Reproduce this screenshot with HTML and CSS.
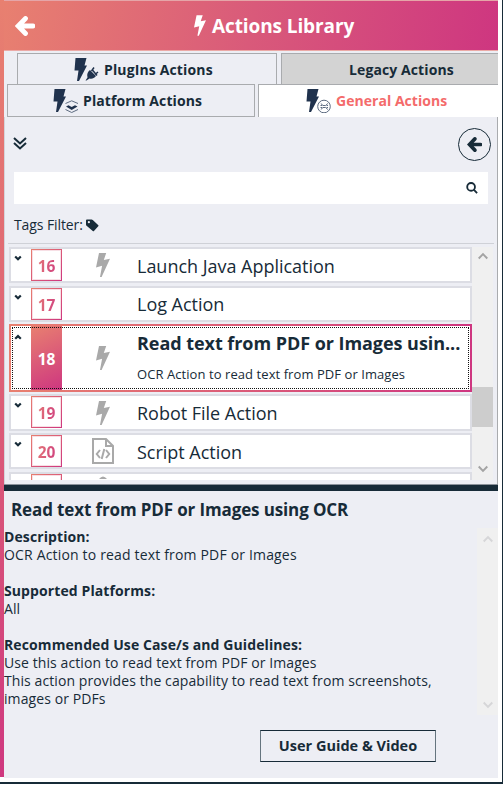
FILE: index.html
```html
<!DOCTYPE html>
<html lang="en">
<head>
<meta charset="utf-8">
<title>Actions Library</title>
<link rel="stylesheet" href="styles.css">
</head>
<body>
<svg class="defs" aria-hidden="true">
  <symbol id="bolt" viewBox="0 0 14 24"><path d="M3 0H10.2L7.8 7L14 5.8L5.600 24H4L6.100 12.800L0 14.400Z"/></symbol>
  <symbol id="arrow" viewBox="0 0 20 20"><path d="M10.500 2.500L3.200 10L10.500 17.500M4 10H18" fill="none" stroke="currentColor" stroke-width="4.800" stroke-linecap="round"/></symbol>
  <symbol id="up" viewBox="0 0 10 8"><path d="M.7 6.5L5 2.2L9.3 6.5" fill="none" stroke="currentColor" stroke-width="1.9"/></symbol>
  <symbol id="down" viewBox="0 0 10 8"><path d="M.7 1.5L5 5.8L9.3 1.5" fill="none" stroke="currentColor" stroke-width="1.9"/></symbol>
  <symbol id="open" viewBox="0 0 8 7"><path d="M1.200 1.500L4 4.200L6.800 1.500" fill="none" stroke="currentColor" stroke-width="2.200"/></symbol>
  <symbol id="close" viewBox="0 0 8 7"><path d="M1.200 4.800L4 2.100L6.800 4.800" fill="none" stroke="currentColor" stroke-width="2.200"/></symbol>
</svg>
<div class="window">
  <div class="stripe"></div>
  <main class="panel">
    <header class="header">
      <svg class="back"><use href="#arrow"/></svg>
      <svg class="header-bolt"><use href="#bolt"/></svg>
      <h1>Actions Library</h1>
    </header>
    <nav class="tabs">
      <div class="tab-row first">
        <div class="tab plugins">
          <svg class="tab-icon" viewBox="0 0 25 24"><path d="M1.500 0H12.500L10.500 7.500H13L5 23H3L4.500 12.500H.500Z"/><path d="M11.500 22.500L13.500 19.500C12.500 16 14 13.500 16 12L22 18C20 20.500 18 21 15.500 20.500L12.500 22.500Z"/><path d="M17.500 13L20 9.500M21 16.500L24 14M18 11.500L23 17.500" fill="none" stroke="currentColor" stroke-width="1.500"/></svg>
          <span>PlugIns Actions</span>
        </div>
        <div class="tab legacy"><span>Legacy Actions</span></div>
      </div>
      <div class="tab-row second">
        <div class="tab platform">
          <svg class="tab-icon" viewBox="0 0 25 24"><path d="M1.500 0H12.500L10.500 7.500H13L5 23H3L4.500 12.500H.500Z"/><path d="M13 17.500L15.500 16.300L18.700 18L22 16.300L24.500 17.500L18.700 21Z"/><path d="M12.500 14.500L18.700 11.800L25 14.500M12.500 20.500L18.700 23.500L25 20.500" class="thin"/></svg>
          <span>Platform Actions</span>
        </div>
        <div class="tab general">
          <svg class="tab-icon" viewBox="0 0 25 24"><path d="M1.500 0H12.500L10.500 7.500H13L5 23H3L4.500 12.500H.500Z"/><circle cx="18" cy="17.500" r="6.300" class="thin"/><path d="M14.800 14.500L17 16.500L19.600 16.500L21.800 14.500M14.800 20.500L17 18.500H19.600L21.800 20.500M14.500 16.500H16M20.600 16.500H22M14.500 18.500H16M20.600 18.500H22" class="thin"/></svg>
          <span>General Actions</span>
        </div>
      </div>
    </nav>
    <section class="content">
      <div class="toolbar">
        <svg class="expand" viewBox="0 0 14 13"><path d="M1 1L7 6.500L13 1M1 6L7 11.500L13 6"/></svg>
        <div class="round"><svg class="round-arrow"><use href="#arrow"/></svg></div>
      </div>
      <div class="search">
        <svg viewBox="0 0 13 13"><circle cx="5.500" cy="5.300" r="4.200"/><path d="M8.400 8.300L12 12"/></svg>
      </div>
      <div class="tags"><span>Tags Filter:</span><svg viewBox="0 0 14 13"><path fill-rule="evenodd" d="M0 1Q0 0 1 0H6Q6.700 0 7.300.600L13.300 6.200Q13.800 6.800 13.200 7.400L8.600 12.500Q8 13 7.300 12.500L.600 6.800Q0 6.200 0 5.500ZM3.100 1.700A1.200 1.200 0 1 0 3.100 4.100A1.200 1.200 0 1 0 3.100 1.700"/></svg></div>
      <div class="list-area">
        <div class="list">
          <div class="row"><svg class="toggle"><use href="#open"/></svg><div class="num"><b>16</b></div><div class="kind"><svg class="bolt"><use href="#bolt"/></svg></div><p>Launch Java Application</p></div>
          <div class="row"><svg class="toggle"><use href="#open"/></svg><div class="num"><b>17</b></div><div class="kind"></div><p>Log Action</p></div>
          <div class="row selected"><svg class="toggle"><use href="#close"/></svg><div class="num"><b>18</b></div><div class="kind"><svg class="bolt"><use href="#bolt"/></svg></div><div class="detail"><h2>Read text from PDF or Images usin...</h2><small>OCR Action to read text from PDF or Images</small></div></div>
          <div class="row"><svg class="toggle"><use href="#open"/></svg><div class="num"><b>19</b></div><div class="kind"><svg class="bolt"><use href="#bolt"/></svg></div><p>Robot File Action</p></div>
          <div class="row"><svg class="toggle"><use href="#open"/></svg><div class="num"><b>20</b></div><div class="kind"><svg class="file" viewBox="0 0 22 26"><path d="M1 1H14L21 8V25H1ZM14 1V8H21"/><path d="M8 12L4.800 16L8 20M14 12L17.200 16L14 20M12.300 11L9.700 21"/></svg></div><p>Script Action</p></div>
          <div class="row"><span class="toggle"></span><div class="num"></div><div class="kind"><svg class="dome" viewBox="0 0 8 3"><path d="M0 3Q4-2 8 3Z"/></svg></div></div>
        </div>
        <div class="scrollbar"><svg><use href="#up"/></svg><i></i><svg><use href="#down"/></svg></div>
      </div>
    </section>
    <div class="splitter"></div>
    <section class="info">
      <h2>Read text from PDF or Images using OCR</h2>
      <div class="info-body">
        <div class="text">
          <b>Description:</b>
          <p class="wide">OCR Action to read text from PDF or Images</p>
          <b>Supported Platforms:</b>
          <p>All</p>
          <b>Recommended Use Case/s and Guidelines:</b>
          <p>Use this action to read text from PDF or Images<br>This action provides the capability to read text from screenshots,<br>images or PDFs</p>
        </div>
        <div class="scrollbar faint"><svg><use href="#up"/></svg><svg><use href="#down"/></svg></div>
      </div>
      <button>User Guide &amp; Video</button>
    </section>
  </main>
</div>
</body>
</html>
```
FILE: styles.css
```css
* { box-sizing: border-box; }
body { margin: 0; background: #fff; color: #172b38; font: 14px/18px "Open Sans", "Noto Sans", sans-serif; overflow: hidden; }
h1, h2, p { margin: 0; font-weight: 700; white-space: nowrap; }
b, .tab span { font-weight: 700; }
svg { display: block; flex: none; fill: currentColor; }
.defs { position: absolute; width: 0; height: 0; }
.window { display: flex; width: 503px; height: 784px; border-right: 1px solid #172b38; border-bottom: 2px solid #172b38; }
.stripe { width: 4px; height: 777px; background: linear-gradient(#e88070, #e06a74 35%, #cf387f); }
.panel { width: 494px; height: 778px; background: #edeef4; }

.header { display: flex; align-items: center; height: 51px; padding: 0 0 0 11px; color: #fff; background: linear-gradient(100deg, #e88070, #d95a7a 50%, #ce3680); border-top: 1px solid #e5a5a8; border-bottom: 1px solid #eba9a6; }
.back { width: 20px; height: 20px; }
.header-bolt { width: 12px; height: 21px; margin: 0 6px 0 159px; }
.header h1 { padding-top: 1px; font-size: 19px; line-height: 26px; letter-spacing: -.1px; }

.tabs { height: 66px; padding-top: 2px; }
.tab-row { display: flex; }
.first { height: 31px; padding-left: 13px; gap: 4px; }
.second { height: 33px; padding-left: 3px; gap: 3px; }
.tab { display: flex; align-items: center; border: 1px solid #a9abae; background: #edeef4; letter-spacing: .1px; }
.first .tab { border-bottom: 0; height: 31px; padding-top: 1px; }
.second .tab { height: 33px; }
.tab-icon { width: 25px; height: 24px; color: #20324d; }
.thin { fill: none; stroke: #5d6b80; stroke-width: 1; }
.plugins { width: 260px; padding-left: 56px; }
.plugins span { margin-left: 5px; letter-spacing: .14px; }
.legacy { width: 217px; padding-left: 67px; border-right: 0; background: #d3d3d3; }
.platform { width: 248px; padding-left: 45px; }
.platform span { margin-left: 5px; }
.tab.general { width: 240px; padding-left: 47px; background: #fff; border-right: 0; border-bottom: 0; color: #f46b6b; letter-spacing: .04px; }
.general span { margin-left: 5px; }

.content { height: 367px; border-left: 1px solid #d4d5da; border-right: 1px solid #a9abae; padding: 0 3px; }
.toolbar { display: flex; justify-content: space-between; height: 55px; padding: 11px 3px 0 5px; }
.expand { width: 14px; height: 13px; margin-top: 9px; fill: none; stroke: #172b38; stroke-width: 2; }
.round { display: flex; align-items: center; justify-content: center; width: 33px; height: 33px; border: 1px solid #172b38; border-radius: 50%; }
.round-arrow { width: 15px; height: 15px; }
.search { display: flex; align-items: center; justify-content: flex-end; width: 474px; height: 32px; margin-left: 6px; padding-right: 10px; background: #fff; }
.search svg { width: 12px; height: 12px; fill: none; stroke: #172b38; stroke-width: 2; }
.tags { display: flex; height: 39px; padding: 12px 0 0 6px; letter-spacing: -.1px; }
.tags span { width: 72px; }
.tags svg { width: 13px; height: 13px; margin-top: 3px; }
.list-area { display: flex; height: 237px; border-top: 1px solid #cfd1d7; padding-top: 3px; }
.list { width: 464px; height: 233px; overflow: hidden; padding-left: 1px; }
.row { display: flex; height: 36px; margin-bottom: 3px; border: 2px solid #dcdde4; background: #fff; }
.row:nth-child(2) { margin-bottom: 2px; }
.row:nth-child(2) p { line-height: 32px; }
.row:nth-child(4) { height: 37px; margin-bottom: 2px; }
.toggle { width: 8px; height: 7px; margin: 6px 0 0 3px; }
.num { width: 31px; height: 32px; margin-left: 9px; padding-top: 1px; display: flex; align-items: center; justify-content: center; border: 1px solid; border-image: linear-gradient(135deg, #e88070, #ce3680) 1; box-shadow: inset 0 0 0 1px #f7dfe5; }
.num b { font-size: 15.500px; line-height: 20px; background: linear-gradient(100deg, #e47576, #d0427f); -webkit-background-clip: text; background-clip: text; color: transparent; }
.kind { width: 75px; display: flex; align-items: center; justify-content: center; padding-left: 7px; color: #a9a9a9; }
.bolt { width: 14px; height: 24px; }
.file { width: 22px; height: 26px; fill: none; stroke: #a9a9a9; stroke-width: 2; }
.dome { width: 8px; height: 3px; margin-bottom: 25px; }
.row p { font-size: 18px; font-weight: 400; line-height: 34px; letter-spacing: -.02px; }
.row.selected { height: 68px; margin-bottom: 2px; border: 2px solid; border-image: linear-gradient(90deg, #e88070, #ce3680) 1; outline: 1px dotted #111; outline-offset: -4px; }
.selected .num { height: 64px; border: 0; background: linear-gradient(155deg, #e88070, #ce3680); box-shadow: none; }
.selected .num b { background: none; color: #fff; }
.selected .toggle { margin-top: 8px; }
.detail { padding-top: 4px; }
.detail h2 { font-size: 18px; line-height: 26px; letter-spacing: -.05px; }
.detail small { display: block; margin-top: 9px; font-size: 13px; line-height: 18px; letter-spacing: .07px; }

.scrollbar { display: flex; flex-direction: column; width: 21px; background: #f0f0f0; align-items: center; color: #a3a3a3; }
.scrollbar svg { width: 10px; height: 8px; margin-top: 5px; }
.scrollbar i { width: 21px; height: 40px; margin-top: 127px; background: #cdcdcd; }
.scrollbar i + svg { margin-top: 38px; }

.splitter { height: 7px; background: #172b38; border-top: 1px solid #8b929b; }
.info h2 { height: 37px; padding: 6px 0 0 7px; font-size: 17px; line-height: 26px; letter-spacing: -.13px; }
.info-body { display: flex; justify-content: space-between; height: 187px; }
.text b { display: block; letter-spacing: .1px; }
.text p { font-weight: 400; letter-spacing: .09px; margin-bottom: 18px; }
.text .wide { letter-spacing: .17px; }
.scrollbar.faint { justify-content: space-between; padding: 2px 0 6px; color: #d6d6d8; }
.faint svg { margin-top: 5px; }
button { display: block; width: 176px; height: 32px; margin: 15px 0 0 256px; padding: 0; border: 1px solid #172b38; border-right-color: #65747e; border-left-color: #65747e; outline: 0; background: #edeef4; color: #172b38; font: 700 14.500px/20px "Open Sans", "Noto Sans", sans-serif; }
```
